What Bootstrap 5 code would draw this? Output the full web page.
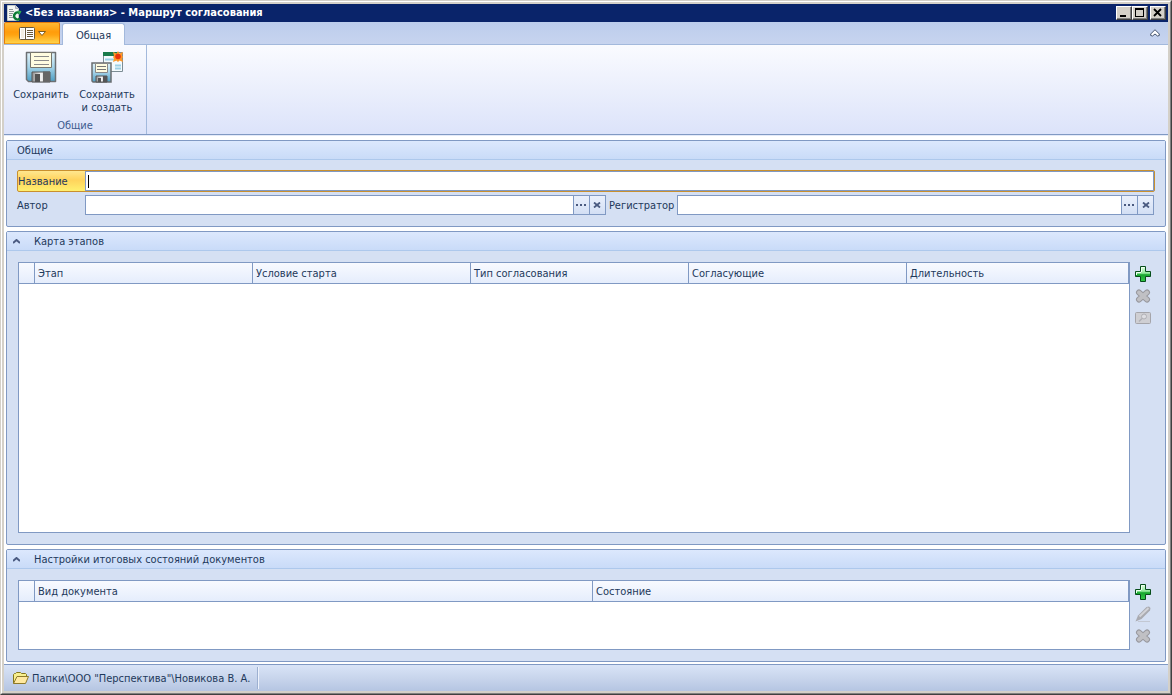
<!DOCTYPE html>
<html lang="ru">
<head>
<meta charset="utf-8">
<meta name="viewport" content="width=device-width, initial-scale=1">
<title>Маршрут согласования</title>
<link href="https://cdn.jsdelivr.net/npm/bootstrap@5.3.0/dist/css/bootstrap.min.css" rel="stylesheet">
<style>
:root { --line: #8099c3; --ink: #1e395b; }
body { font: 11px/13px "DejaVu Sans Condensed", Tahoma, sans-serif; color: var(--ink); }
button, input { font: inherit; color: inherit; }
button { padding: 0; border: 0; background: none; }
svg { display: block; flex: none; }
.window { border: 1px solid; border-color: #d4d0c8 #404040 #404040 #d4d0c8; }
.frame-hi { border: 1px solid; border-color: #fff #808080 #808080 #fff; }
.frame-in { border: 2px solid #d4d0c8; background: #fff; }
.title-bar { height: 18px; background: #0a246a; color: #fff; padding: 0 2px; }
.title-text { font-size: 11px; line-height: 18px; font-weight: 700; margin-left: 3px; }
.win-btn { width: 16px; height: 14px; background: #d4d0c8; border: 1px solid; border-color: #fff #404040 #404040 #fff; box-shadow: inset -1px -1px #808080; }
.close-btn { margin-left: 2px; }
.tab-strip { height: 23px; background: linear-gradient(#bccdec, #c7d4ef); border-bottom: 1px solid #a3b9dc; }
.app-btn { width: 56px; height: 22px; border: 1px solid #e47b0c; border-bottom-color: #f2a21c; border-radius: 2px 2px 0 0; background: linear-gradient(#ffb833, #ff9c0b 45%, #ffa411 60%, #ffd24a); gap: 3px; }
.ribbon-tab { width: 63px; height: 22px; margin: 1px 0 0 2px; padding-top: 1px; border: 1px solid #a3b9dc; border-bottom: 0; border-radius: 3px 3px 0 0; background: linear-gradient(#fff, #f8faff); }
.ribbon { height: 90px; background: linear-gradient(#fafbff, #ebeffc 50%, #dce3fa); border-bottom: 1px solid var(--line); }
.ribbon-group { width: 143px; border-right: 1px solid #a3b9dc; }
.ribbon-btn { width: 66px; padding-top: 6px; gap: 5px; }
.group-name { color: #3e5c8f; line-height: 13px; padding: 0 0 2px; }
.work { padding: 4px 2px 2px; gap: 4px; background: #fff; border-top: 1px solid #e4eaf8; }
.pane { border: 1px solid var(--line); border-radius: 2px; background: #d5e0f3; }
.pane-head { height: 19px; padding: 1px 10px 0; background: linear-gradient(#dce8fd, #c9dbf8); border-bottom: 1px solid #adc8ec; }
.pane-head.foldable { padding: 1px 6px 0; gap: 14px; }
.form-body { padding: 10px 11px 11px 10px; gap: 3px; }
.field-label { width: 68px; }
.registrar { width: 71px; padding-left: 3px; }
.active-field { border: 1px solid #c9902e; border-radius: 2px; height: 22px; background: linear-gradient(#ffe78f, #ffd35c 45%, #fff06f); margin-right: -1px; }
.active-field .field-label { width: 67px; }
.active-field input { border: 1px solid var(--line); background: linear-gradient(#000, #000) 2px center / 1px 13px no-repeat #fff; padding: 0 2px; outline: 0; caret-color: transparent; }
.picker { height: 20px; border: 1px solid var(--line); background: #fff; flex: 521 1 0; min-width: 0; }
.picker.narrow { flex-grow: 477; }
.picker input { border: 0; outline: 0; padding: 0 2px; background: none; min-width: 0; }
.picker button { width: 16px; border-left: 1px solid var(--line); background: linear-gradient(#eaf0fc, #d3dff4); }
.pane-body { padding: 11px 14px 11px 11px; gap: 5px; }
.grid-box { border: 1px solid var(--line); background: #fff; }
.grid-box table { table-layout: fixed; border-collapse: separate; border-spacing: 0; }
.grid-box th { height: 21px; padding: 0 3px; font-weight: 400; border-right: 1px solid var(--line); border-bottom: 1px solid var(--line); background: linear-gradient(#f8faff, #e5edfc); }
.grid-box .marker { width: 16px; }
.stage-box th:nth-child(-n+5):not(.marker) { width: 19.64%; }
.kind-col { width: 50.27%; }
.tools { width: 16px; gap: 6px; padding-top: 4px; }
.summary-box { height: 70px; }
.status { height: 27px; border-top: 1px solid var(--line); background: linear-gradient(#d9e4f7, #c8d5ec 50%, #b5c5e2); padding-left: 9px; }
.status a { color: inherit; gap: 3px; padding-right: 7px; border-right: 1px solid #9db0d0; box-shadow: 1px 0 #eef3fc; height: 22px; }
</style>
</head>
<body>
<svg width="0" height="0" class="position-absolute" aria-hidden="true">
  <defs>
    <linearGradient id="gGreen" x2="0" y2="1"><stop stop-color="#e2ffe2"/><stop offset=".45" stop-color="#8fe99a"/><stop offset=".55" stop-color="#15a52d"/><stop offset="1" stop-color="#35c94a"/></linearGradient>
    <linearGradient id="gBlue" x2="0" y2="1"><stop stop-color="#e3f3fa"/><stop offset=".5" stop-color="#a4d3e8"/><stop offset="1" stop-color="#4e9fc4"/></linearGradient>
    <linearGradient id="gSteel" x2="1" y2="0"><stop stop-color="#8d8d8d"/><stop offset=".5" stop-color="#f4f4f4"/><stop offset="1" stop-color="#a9a9a9"/></linearGradient>
    <symbol id="plus" viewBox="0 0 16 16"><path d="M5.500.5h5v5h5v5h-5v5h-5v-5h-5v-5h5z" fill="url(#gGreen)" stroke="#064d1a" stroke-linejoin="round"/><path d="M6.500 6V1.500h3M1.500 9V6.500H6" fill="none" stroke="#effff0"/></symbol>
    <symbol id="cross" viewBox="0 0 16 16"><path d="m4 4.500 8 7m0-7-8 7" stroke="#98989e" stroke-width="6" stroke-linecap="round"/><path d="m4 4.500 8 7m0-7-8 7" stroke="#c0c0c4" stroke-width="4" stroke-linecap="round"/></symbol>
    <symbol id="fold" viewBox="0 0 7 5"><path d="m0 4 3.500-3L7 4" fill="none" stroke="#4a5a80" stroke-width="2"/></symbol>
    <symbol id="dots" viewBox="0 0 11 2"><path d="M0 0h2v2H0zm4 0h2v2H4zm4 0h2v2H8z" fill="#4a5a80"/></symbol>
    <symbol id="clear" viewBox="0 0 8 6"><path d="m1 .5 6 5m0-5-6 5" fill="none" stroke="#4a5a80" stroke-width="1.800"/></symbol>
    <symbol id="disk" viewBox="0 0 32 32"><path d="M1.500 1.500h29v29h-27l-2-2z" fill="url(#gBlue)" stroke="#6d7073" stroke-width="1.500" stroke-linejoin="round"/><path d="M5.500 1.500h21v15h-21z" fill="#fffce0" stroke="#77766d"/><path d="M9 5.500h15M9 9.500h15M9 13.500h15" stroke="#8a8a8a"/><path d="M7 21h18v10H7z" fill="url(#gSteel)" stroke="#555"/><path d="M18 20.500h7V31h-7z" fill="#666"/><path d="M10 23h5v8h-5z" fill="#535353"/></symbol>
  </defs>
</svg>
<div class="window min-vh-100 d-flex flex-column">
<div class="frame-hi flex-grow-1 d-flex flex-column">
<div class="frame-in flex-grow-1 d-flex flex-column">

  <header class="title-bar d-flex align-items-center">
    <svg width="16" height="16" viewBox="0 0 16 16"><path d="M1.500.5h8l3 3v12h-11z" fill="#f5f7f5" stroke="#c5cbc8"/><path d="M9.500.5v3h3" fill="#cfd6d3" stroke="#aab"/><path d="M3 4.500h4M3 6.500h5M3 8.500h4M3 10.500h3M3 12.500h4" stroke="#8d9597"/><path d="M14 8.500a3.500 3.500 0 1 0 0 5" fill="none" stroke="#0c7a35" stroke-width="2.500"/><path d="M11.500 5.500 15.500 6l-2 4z" fill="#2fae54"/></svg>
    <span class="title-text me-auto">&lt;Без названия&gt; - Маршрут согласования</span>
    <button class="win-btn" aria-label="Свернуть"><svg width="14" height="12"><path d="M3 8h6v2H3z"/></svg></button>
    <button class="win-btn" aria-label="Развернуть"><svg width="14" height="12"><path d="M2 1h9v9H2zm1 2v6h7V3z" fill-rule="evenodd"/></svg></button>
    <button class="win-btn close-btn" aria-label="Закрыть"><svg width="14" height="12"><path d="m3 2 7 7m0-7-7 7" stroke="#000" stroke-width="1.800"/></svg></button>
  </header>

  <nav class="tab-strip d-flex">
    <button class="app-btn d-flex align-items-center justify-content-center" aria-label="Меню">
      <svg width="16" height="13" viewBox="0 0 16 13"><rect x=".5" y=".5" width="15" height="12" rx="1" fill="#fff" stroke="#6a5a3c"/><path d="M6.500 1v11M8 3.500h6M8 5.500h6M8 7.500h6M8 9.500h6" stroke="#6a5a3c"/><path d="M2 2h3v9H2z" fill="#f3eee2"/></svg>
      <svg width="8" height="5" viewBox="0 0 8 5"><path d="M.5.500h7L4 4.500z" fill="#fff" stroke="#7c5c20"/></svg>
    </button>
    <button class="ribbon-tab">Общая</button>
    <button class="ms-auto me-2" aria-label="Свернуть ленту"><svg width="10" height="8" viewBox="0 0 10 8"><path d="M5 .7 9.300 5v1.500L7.500 7 5 5 2.500 7 .7 6.500V5z" fill="#fff" stroke="#44546f"/></svg></button>
  </nav>

  <section class="ribbon d-flex">
    <div class="ribbon-group d-flex flex-column">
      <div class="d-flex flex-grow-1 ps-1">
        <button class="ribbon-btn d-flex flex-column align-items-center"><svg width="32" height="32"><use href="#disk"/></svg><span>Сохранить</span></button>
        <button class="ribbon-btn d-flex flex-column align-items-center">
          <svg width="32" height="32" viewBox="0 0 32 32"><path d="M12.500 1.500h19v19h-19z" fill="#f4fafd" stroke="#7c8c94"/><path d="M12 1h16v4H12z" fill="#197a4b"/><path d="M14 8.500h12M24 14.500h6M24 17.500h6" stroke="#9bd0e6" stroke-width="2"/><svg y="11" width="21" height="21" viewBox="0 0 21 21"><path d="M1 1h19v19H2l-1-1z" fill="url(#gBlue)" stroke="#696d70" stroke-width="1.500"/><path d="M4.500 1.500h12v9h-12z" fill="#fffce0" stroke="#888"/><path d="M6 4.500h9M6 7.500h9" stroke="#777"/><path d="M5 14h11v6H5z" fill="url(#gSteel)" stroke="#555"/><path d="M12 14h4v6h-4zM7 16h3v4H7z" fill="#555"/></svg><path d="m27 0 1.500 2.500L32 1l-1 3.500 1 1.500-1 1.500L32 11l-3.500-1.500L27 11l-1.500-1.500L22 11l1-3.500L22 6l1-1.500L22 1l3.500 1.500z" fill="#ff9727"/><circle cx="27" cy="5.500" r="2.800" fill="#e8330c"/></svg>
          <span>Сохранить<br>и создать</span></button>
      </div>
      <div class="group-name text-center">Общие</div>
    </div>
  </section>

  <main class="work flex-grow-1 d-flex flex-column">
    <section class="pane">
      <div class="pane-head d-flex align-items-center">Общие</div>
      <form class="form-body d-flex flex-column">
        <div class="active-field d-flex align-items-stretch">
          <label class="field-label align-self-center" for="name">Название</label>
          <input id="name" type="text" class="flex-grow-1" autofocus>
        </div>
        <div class="d-flex align-items-center">
          <label class="field-label" for="author">Автор</label>
          <div class="picker d-flex"><input id="author" type="text" class="flex-grow-1">
            <button type="button" class="d-flex align-items-center justify-content-center" aria-label="Выбрать автора"><svg width="11" height="2"><use href="#dots"/></svg></button>
            <button type="button" class="d-flex align-items-center justify-content-center" aria-label="Очистить автора"><svg width="8" height="6"><use href="#clear"/></svg></button></div>
          <label class="registrar" for="registrar">Регистратор</label>
          <div class="picker narrow d-flex"><input id="registrar" type="text" class="flex-grow-1">
            <button type="button" class="d-flex align-items-center justify-content-center" aria-label="Выбрать регистратора"><svg width="11" height="2"><use href="#dots"/></svg></button>
            <button type="button" class="d-flex align-items-center justify-content-center" aria-label="Очистить регистратора"><svg width="8" height="6"><use href="#clear"/></svg></button></div>
        </div>
      </form>
    </section>

    <section class="pane flex-grow-1 d-flex flex-column">
      <div class="pane-head foldable d-flex align-items-center"><svg width="7" height="5"><use href="#fold"/></svg>Карта этапов</div>
      <div class="pane-body d-flex flex-grow-1">
        <div class="grid-box stage-box flex-grow-1">
          <table class="w-100"><thead><tr><th class="marker"></th><th>Этап</th><th>Условие старта</th><th>Тип согласования</th><th>Согласующие</th><th>Длительность</th></tr></thead></table>
        </div>
        <div class="tools d-flex flex-column">
          <button aria-label="Добавить"><svg width="16" height="16"><use href="#plus"/></svg></button>
          <button aria-label="Удалить"><svg width="16" height="16"><use href="#cross"/></svg></button>
          <button aria-label="Просмотр"><svg width="16" height="16" viewBox="0 0 16 16"><rect x=".5" y="2.500" width="15" height="11" rx="1" fill="#cfcfd3" stroke="#a5a5aa"/><circle cx="9" cy="6.500" r="2.500" fill="#dedee2" stroke="#b0b0b5"/><path d="m7 8.500-3 3" stroke="#b0b0b5" stroke-width="1.500"/></svg></button>
        </div>
      </div>
    </section>

    <section class="pane">
      <div class="pane-head foldable d-flex align-items-center"><svg width="7" height="5"><use href="#fold"/></svg>Настройки итоговых состояний документов</div>
      <div class="pane-body d-flex">
        <div class="grid-box summary-box flex-grow-1">
          <table class="w-100"><thead><tr><th class="marker"></th><th class="kind-col">Вид документа</th><th>Состояние</th></tr></thead></table>
        </div>
        <div class="tools d-flex flex-column">
          <button aria-label="Добавить"><svg width="16" height="16"><use href="#plus"/></svg></button>
          <button aria-label="Изменить"><svg width="16" height="16" viewBox="0 0 16 16"><path d="M3 15.500h12" stroke="#c3c8d3"/><path d="m.5 15.500 2.500-6L11.500 1 14 .500 15.500 2 15 4.500 6.500 13z" fill="#a9aab0"/><path d="m4.500 10.500 9-8.500" stroke="#d2d3d8" stroke-width="2"/></svg></button>
          <button aria-label="Удалить"><svg width="16" height="16"><use href="#cross"/></svg></button>
        </div>
      </div>
    </section>
  </main>

  <footer class="status d-flex align-items-center">
    <a href="#" class="d-flex align-items-center text-decoration-none">
      <svg width="16" height="14" viewBox="0 0 16 14"><path d="M.5 12.500v-9l1-1h1l1-1h4l1 1h4l1 1v2" fill="#f7ef8e" stroke="#85761b"/><path d="m.5 12.500 3.500-7h11.500l-3 7z" fill="#ffe9a0" stroke="#8e7a2a" stroke-linejoin="round"/></svg>
      Папки\ООО "Перспектива"\Новикова В. А.</a>
  </footer>

</div>
</div>
</div>
<script src="https://cdn.jsdelivr.net/npm/bootstrap@5.3.0/dist/js/bootstrap.bundle.min.js"></script>
</body>
</html>
